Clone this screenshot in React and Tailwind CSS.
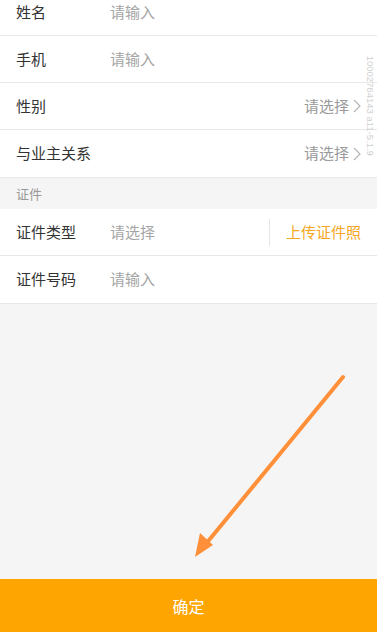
import React from "react";

const font = { fontFamily: '"Noto Sans CJK SC", "Liberation Sans", sans-serif' };

const Chevron = () => (
  <svg width="8" height="14" viewBox="0 0 8 14" className="ml-1">
    <path d="M1 1 L7 7 L1 13" fill="none" stroke="#b5b5b5" strokeWidth="1.2" />
  </svg>
);

const Row = ({ label, placeholder, select, last }) => (
  <div className={`h-[47px] flex items-center pl-4 pr-4 bg-white ${last ? "" : "border-b border-[#e8e8e8]"}`}>
    <span className="w-[94px] shrink-0 text-[15px] text-[#333]">{label}</span>
    {select ? (
      <div className="flex-1 flex items-center justify-end text-[15px] text-[#999]">
        {placeholder}
        <Chevron />
      </div>
    ) : (
      <span className="flex-1 text-[15px] text-[#a5a5a5]">{placeholder}</span>
    )}
  </div>
);

export default function App() {
  return (
    <div className="relative w-[377px] h-[632px] overflow-hidden bg-[#f5f5f5]" style={font}>
      <div className="flex flex-col h-full">
        <div className="-mt-[11px]">
          <Row label="姓名" placeholder="请输入" />
          <Row label="手机" placeholder="请输入" />
          <Row label="性别" placeholder="请选择" select />
          <Row label="与业主关系" placeholder="请选择" select last />
        </div>
        <div className="h-[32px] flex items-center pl-4 text-[13px] text-[#999] border-t border-[#e8e8e8]">证件</div>
        <div className="h-[47px] flex items-center pl-4 pr-4 bg-white border-b border-[#e8e8e8]">
          <span className="w-[94px] shrink-0 text-[15px] text-[#333]">证件类型</span>
          <span className="flex-1 text-[15px] text-[#a5a5a5]">请选择</span>
          <div className="w-px h-[27px] bg-[#e5e5e5] mr-[16px]" />
          <span className="text-[15px] text-[#f5a623]">上传证件照</span>
        </div>
        <div className="border-b border-[#e8e8e8]">
          <Row label="证件号码" placeholder="请输入" last />
        </div>
        <div className="flex-1" />
        <button className="h-[53px] w-full bg-[#ffa502] text-white text-[16px]">确定</button>
      </div>

      <div className="absolute left-[365px] top-[50px] w-[10px] h-[112px] flex items-center justify-center">
        <span className="rotate-90 whitespace-nowrap text-[9.5px] leading-none text-[#cfcfcf]" style={{ fontFamily: '"Liberation Sans", sans-serif' }}>
          10002764143 a11-5.1.9
        </span>
      </div>

      <svg className="absolute left-0 top-0" width="377" height="632">
        <line x1="343" y1="377" x2="205" y2="545" stroke="#ff8f38" strokeWidth="4" strokeLinecap="round" />
        <polygon points="195,557 200,533 213,545" fill="#ff8f38" />
      </svg>
    </div>
  );
}
